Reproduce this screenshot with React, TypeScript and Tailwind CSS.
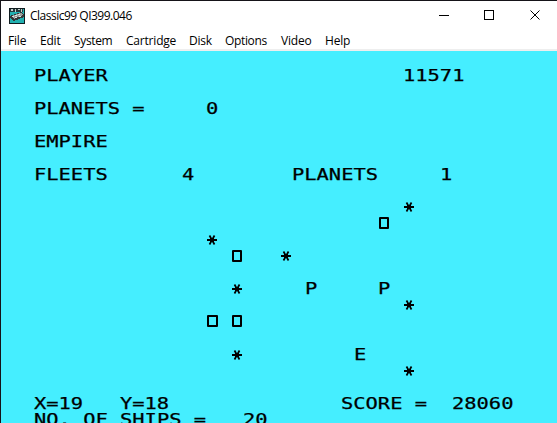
import React from "react";

type Cell = { row: number; col: number };
type Label = Cell & { text: string };

const labels: Label[] = [
  { row: 0, col: 0, text: "PLAYER" },
  { row: 0, col: 30, text: "11571" },
  { row: 2, col: 0, text: "PLANETS =" },
  { row: 2, col: 14, text: "0" },
  { row: 4, col: 0, text: "EMPIRE" },
  { row: 6, col: 0, text: "FLEETS" },
  { row: 6, col: 12, text: "4" },
  { row: 6, col: 21, text: "PLANETS" },
  { row: 6, col: 33, text: "1" },
  { row: 13, col: 22, text: "P" },
  { row: 13, col: 28, text: "P" },
  { row: 17, col: 26, text: "E" },
  { row: 20, col: 0, text: "X=19" },
  { row: 20, col: 7, text: "Y=18" },
  { row: 20, col: 25, text: "SCORE =" },
  { row: 20, col: 34, text: "28060" },
  { row: 21, col: 0, text: "NO. OF SHIPS =" },
  { row: 21, col: 17, text: "20" },
];

const stars: Cell[] = [
  { row: 8, col: 30 },
  { row: 10, col: 14 },
  { row: 11, col: 20 },
  { row: 13, col: 16 },
  { row: 14, col: 30 },
  { row: 17, col: 16 },
  { row: 18, col: 30 },
];

const planets: Cell[] = [
  { row: 9, col: 28 },
  { row: 11, col: 16 },
  { row: 15, col: 14 },
  { row: 15, col: 16 },
];

const place = (c: Cell, span = 1): React.CSSProperties => ({
  gridRow: c.row + 1,
  gridColumn: `${c.col + 1} / span ${span}`,
});

function AppIcon() {
  return (
    <svg className="h-4 w-4 shrink-0" viewBox="0 0 16 16" shapeRendering="crispEdges">
      <path d="M0 0h16v16H0z" fill="#101c20" />
      <path d="M1 1h14v14H1z" fill="#22b0b0" />
      <path d="M1 1h13v3H1z" fill="#26383a" />
      <path d="M2 1h2v2H2zM6 1h1v3H6zM9 1h2v1H9zM12 1h1v3h-1z" fill="#c5d1ce" />
      <path d="M1 8l11-4 3 3v2L5 13l-4-3z" fill="#343838" />
      <path d="M2 8l10-3 2 2-9 4z" fill="#999e9b" />
      <path d="M3 8h2v1H3zM6 7h2v1H6zM9 6h2v1H9zM6 9h2v1H6zM10 8h2v1h-2z" fill="#dce0dc" />
    </svg>
  );
}

export default function App() {
  return (
    <div className="flex h-[423px] w-[557px] flex-col overflow-hidden border-l border-t border-[#151318] bg-white font-['Open_Sans',sans-serif] text-[12px] text-black">
      <header className="flex h-[29px] shrink-0 items-center pl-2">
        <AppIcon />
        <span className="ml-[5px] w-[103px] whitespace-nowrap tracking-[-0.5px]">Classic99 QI399.046</span>
        <svg className="ml-auto h-[29px] w-[137px]" viewBox="0 0 137 29" fill="none" stroke="#000" shapeRendering="crispEdges">
          <path d="M19 14.5h10M64.500 9.500h9v9h-9z" />
          <path d="M110.500 9.500l9 9m0-9l-9 9" shapeRendering="auto" />
        </svg>
      </header>
      <nav className="flex h-[19px] shrink-0 items-center whitespace-nowrap pl-[7px] pt-[2px] tracking-[-0.2px]">
        <span className="w-8">File</span>
        <span className="w-[34px]">Edit</span>
        <span className="w-[52px] tracking-[-0.35px]">System</span>
        <span className="w-[63px]">Cartridge</span>
        <span className="w-9">Disk</span>
        <span className="w-14 tracking-[-0.35px]">Options</span>
        <span className="w-11">Video</span>
        <span>Help</span>
      </nav>
      <div className="h-0.5 shrink-0 bg-[#eeeeee]" />
      <main className="min-h-0 grow overflow-hidden bg-[#45eeff] pl-[33.4px] pt-[17.4px]">
        <div className="grid w-max grid-cols-[repeat(42,12.29px)] grid-rows-[repeat(22,16.37px)] font-['DejaVu_Sans_Mono',monospace] text-[16.500px] leading-[16.37px]">
          {labels.map((l) => (
            <span
              key={`${l.row}-${l.col}`}
              className="w-max origin-left scale-x-[1.237] whitespace-pre [-webkit-text-stroke:0.25px_black]"
              style={place(l, l.text.length)}
            >
              {l.text}
            </span>
          ))}
          {stars.map((s) => (
            <svg key={`s${s.row}-${s.col}`} className="ml-px mt-[3px] h-[10px] w-[10px]" viewBox="0 0 10 10" stroke="#000" style={place(s)}>
              <path d="M0 5h10" strokeWidth="2" />
              <path d="M2.500 0.500l5 9M7.500 0.500l-5 9" strokeWidth="1.700" />
              <path d="M3 3h4v4h-4z" fill="#000" stroke="none" />
            </svg>
          ))}
          {planets.map((p) => (
            <span key={`p${p.row}-${p.col}`} className="ml-[0.8px] mt-[1.200px] h-[12px] w-[10.4px] rounded-[1px] border-2 border-black" style={place(p)} />
          ))}
        </div>
      </main>
    </div>
  );
}
